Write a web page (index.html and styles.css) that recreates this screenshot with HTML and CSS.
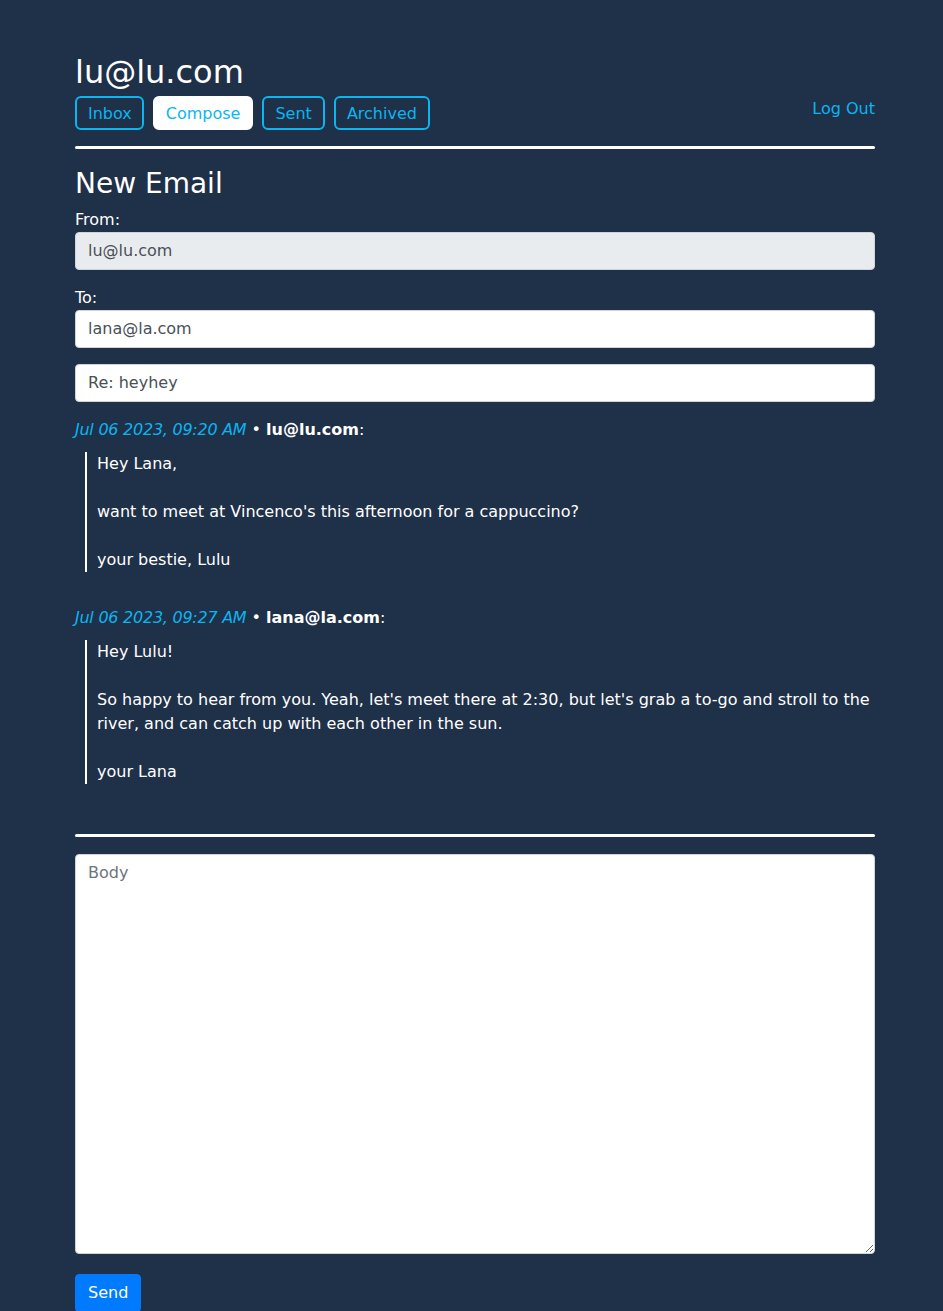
FILE: index.html
```html
<!DOCTYPE html>
<html lang="en">
<head>
<meta charset="utf-8">
<title>Mail</title>
<link rel="stylesheet" href="styles.css">
</head>
<body>
<div class="container">
  <h2 class="user">lu@lu.com</h2>
  <div class="nav">
    <div class="nav-buttons">
      <button class="btn-nav btn-inbox">Inbox</button>
      <button class="btn-nav active">Compose</button>
      <button class="btn-nav">Sent</button>
      <button class="btn-nav">Archived</button>
    </div>
    <a class="logout" href="#">Log Out</a>
  </div>
  <hr class="rule">
  <h3 class="title">New Email</h3>
  <form class="compose">
    <div class="field">
      <label class="label">From:</label>
      <input class="input" disabled value="lu@lu.com">
    </div>
    <div class="field">
      <label class="label">To:</label>
      <input class="input" value="lana@la.com">
    </div>
    <div class="field">
      <input class="input" value="Re: heyhey">
    </div>
    <div class="thread">
      <div class="msg">
        <div class="meta"><span class="ts">Jul 06 2023, 09:20 AM</span> &bull; <b>lu@lu.com</b>:</div>
        <blockquote class="quote">Hey Lana,<br><br>want to meet at Vincenco's this afternoon for a cappuccino?<br><br>your bestie, Lulu</blockquote>
      </div>
      <div class="msg">
        <div class="meta"><span class="ts">Jul 06 2023, 09:27 AM</span> &bull; <b>lana@la.com</b>:</div>
        <blockquote class="quote">Hey Lulu!<br><br>So happy to hear from you. Yeah, let's meet there at 2:30, but let's grab a to-go and stroll to the river, and can catch up with each other in the sun.<br><br>your Lana</blockquote>
      </div>
    </div>
    <hr class="rule rule-body">
    <textarea class="body" placeholder="Body"></textarea>
    <button type="button" class="send">Send</button>
  </form>
</div>
</body>
</html>
```
FILE: styles.css
```css
* { box-sizing: border-box; }
html, body { margin: 0; padding: 0; }
body {
  background: #1f3049;
  color: #ffffff;
  font-family: "DejaVu Sans", "Open Sans", sans-serif;
  font-size: 16px;
  line-height: 1.5;
}
.container {
  width: 800px;
  margin: 0 0 0 75px;
  padding-top: 53px;
  padding-bottom: 40px;
}
.user {
  margin: 0;
  font-size: 32px;
  font-weight: 400;
  line-height: 1.2;
}
.nav {
  display: flex;
  justify-content: space-between;
  align-items: flex-start;
  margin-top: 5px;
}
.nav-buttons { display: flex; gap: 9px; }
.btn-nav {
  font: inherit;
  font-size: 16px;
  line-height: 1.5;
  height: 34px;
  padding: 4px 11px 2px;
  background: transparent;
  color: #0bb5ef;
  border: 2px solid #0bb5ef;
  border-radius: 6px;
}
.btn-inbox { padding: 4px 10px 2px 11px; }
.btn-nav.active { background: #ffffff; border-color: #ffffff; }
.logout {
  color: #0bb5ef;
  text-decoration: none;
  margin-top: 1px;
}
.rule {
  border: 0;
  height: 3px;
  background: #ffffff;
  border-radius: 2px;
  margin: 16px 0 0;
}
.title {
  margin: 18px 0 7px;
  font-size: 28px;
  font-weight: 400;
  line-height: 1.2;
}
.field { margin-bottom: 16px; }
.label { display: block; line-height: 1.5; }
.input {
  display: block;
  width: 100%;
  height: 38px;
  padding: 6px 12px;
  font: inherit;
  font-size: 16px;
  color: #495057;
  background: #ffffff;
  border: 1px solid #ced4da;
  border-radius: 4px;
}
.input:disabled { background: #e9ecef; }
.msg { margin-bottom: 34px; }
.meta { line-height: 1.5; }
.ts { color: #0bb5ef; font-style: italic; letter-spacing: -0.25px; }
.quote {
  margin: 10px 0 0 10px;
  padding: 0 0 0 10px;
  border-left: 2px solid #ffffff;
  line-height: 1.5;
}
.rule-body { margin-top: 50px; margin-bottom: 17px; }
.body {
  display: block;
  width: 100%;
  height: 400px;
  padding: 6px 12px;
  font: inherit;
  font-size: 16px;
  color: #495057;
  background: #ffffff;
  border: 1px solid #ced4da;
  border-radius: 4px;
  resize: vertical;
}
.body::placeholder { color: #6c757d; }
.send {
  margin-top: 20px;
  font: inherit;
  font-size: 16px;
  height: 38px;
  padding: 6px 12px;
  color: #ffffff;
  background: #007bff;
  border: 1px solid #007bff;
  border-radius: 4px;
}
```
